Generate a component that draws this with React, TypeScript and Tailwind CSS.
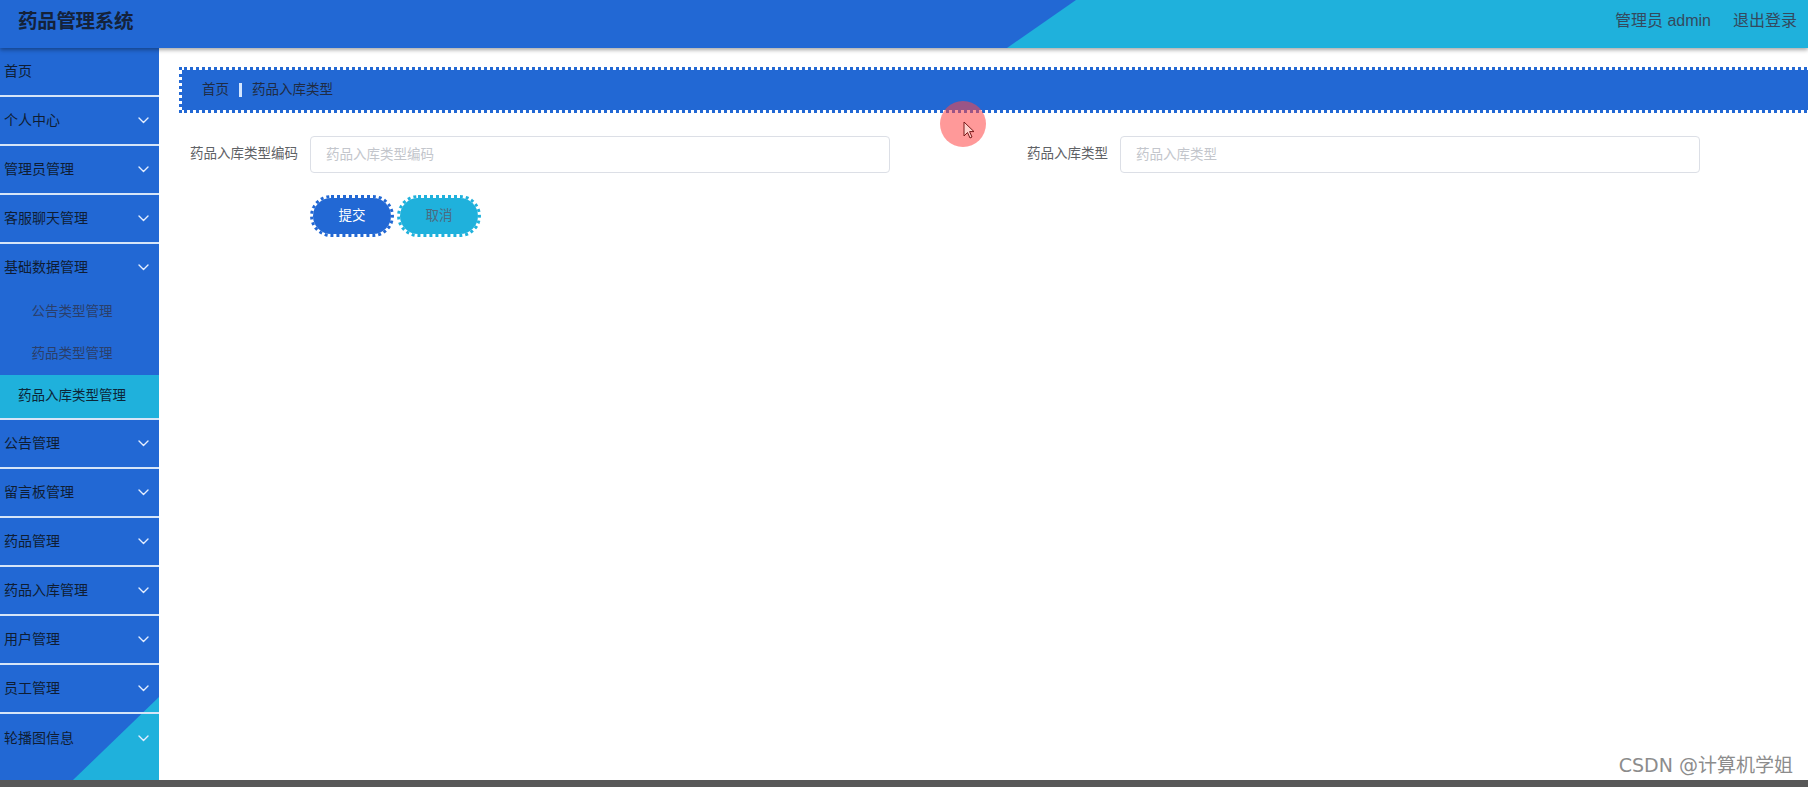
import React from "react";

const BLUE = "bg-[#2268d4]";

const MENU_TOP = ["首页", "个人中心", "管理员管理", "客服聊天管理"];
const MENU_BOTTOM = ["公告管理", "留言板管理", "药品管理", "药品入库管理", "用户管理", "员工管理"];
const SUB_MENU = [
  { label: "公告类型管理", h: "h-[42px]", active: false },
  { label: "药品类型管理", h: "h-[42px]", active: false },
  { label: "药品入库类型管理", h: "h-[43px]", active: true },
];

function Chevron() {
  return (
    <svg className="w-[11px] h-[7px]" viewBox="0 0 11 7" fill="none" stroke="#e4eeff" strokeWidth="1.4" strokeLinecap="round" strokeLinejoin="round">
      <polyline points="1,1 5.5,5.5 10,1" />
    </svg>
  );
}

function MenuItem({ label, arrow = true, last = false }: { label: string; arrow?: boolean; last?: boolean }) {
  return (
    <div
      className={`relative h-[49px] flex items-center justify-between pl-[4px] pr-[10px] ${
        last ? "" : "border-b-2 border-[#d6e5f8]"
      }`}
    >
      <span className="text-[14px] text-[#0f1d33]">{label}</span>
      {arrow && <Chevron />}
    </div>
  );
}

function Sidebar() {
  return (
    <aside className={`relative w-[159px] shrink-0 ${BLUE} overflow-hidden`}>
      {/* corner decoration */}
      <div className="absolute right-0 bottom-0 w-[86px] h-[83px] bg-[#1fb1dc] [clip-path:polygon(100%_0,100%_100%,0_100%)]" />
      <div className="relative">
        <MenuItem label={MENU_TOP[0]} arrow={false} />
        {MENU_TOP.slice(1).map((m) => (
          <MenuItem key={m} label={m} />
        ))}
        <div className="border-b-2 border-[#d6e5f8]">
          <div className="h-[47px] flex items-center justify-between pl-[4px] pr-[10px]">
            <span className="text-[14px] text-[#0f1d33]">基础数据管理</span>
            <Chevron />
          </div>
          {SUB_MENU.map((s) => (
            <div
              key={s.label}
              className={`${s.h} flex items-center justify-center pr-[15px] text-[13.5px] ${
                s.active ? "bg-[#1fb1dc] text-[#0c2638]" : "text-[#2a3f6b]"
              }`}
            >
              {s.label}
            </div>
          ))}
        </div>
        {MENU_BOTTOM.map((m) => (
          <MenuItem key={m} label={m} />
        ))}
        <MenuItem label="轮播图信息" last />
      </div>
    </aside>
  );
}

function Field({ label }: { label: string }) {
  return (
    <div className="flex items-center">
      <label className="w-[120px] pr-[12px] text-right text-[13.5px] text-[#5f6266]">{label}</label>
      <input
        placeholder={label}
        className="w-[580px] h-[37px] px-[15px] border border-[#dcdfe6] rounded-[4px] text-[13.5px] text-[#606266] placeholder:text-[#c3c6cc] outline-none bg-white"
      />
    </div>
  );
}

export default function App() {
  return (
    <div className="relative w-[1808px] h-[787px] flex flex-col overflow-hidden bg-white font-['Liberation_Sans','Noto_Sans_CJK_SC',sans-serif]">
      <header className={`relative z-10 h-[48px] shrink-0 ${BLUE} shadow-[0_2px_4px_rgba(0,0,0,0.35)] flex items-center justify-between`}>
        <div className="absolute left-[1007px] right-0 top-0 bottom-0 bg-[#1fb1dc] [clip-path:polygon(69px_0,100%_0,100%_100%,0_100%)]" />
        <h1 className="relative pl-[18px] pb-[4px] text-[19.5px] font-bold text-[#14223a] tracking-[-0.3px]">药品管理系统</h1>
        <div className="relative flex items-center gap-[22px] pr-[11px] pb-[6px] text-[16px] text-[#34495e]">
          <span>管理员 admin</span>
          <span>退出登录</span>
        </div>
      </header>

      <div className="flex flex-1 min-h-0">
        <Sidebar />
        <main className="flex-1 min-w-0 pl-[20px] pt-[19px] overflow-hidden">
          <div className={`-mr-[10px] h-[46px] ${BLUE} bg-clip-padding border-[3px] border-dotted border-[#2268d4] flex items-center pl-[20px] text-[13.5px] text-[#1f2c45]`}>
            <span>首页</span>
            <span className="mx-[10px] w-[3px] h-[14px] bg-[#d4e6ff]" />
            <span>药品入库类型</span>
          </div>

          <div className="mt-[23px] ml-[11px] flex gap-[110px]">
            <Field label="药品入库类型编码" />
            <Field label="药品入库类型" />
          </div>

          <div className="mt-[22px] ml-[131px] flex gap-[3px]">
            <button
              type="button"
              className="w-[84px] h-[42px] rounded-full bg-[#2268d4] bg-clip-padding border-[3px] border-dotted border-[#2268d4] text-[13.5px] text-white"
            >
              提交
            </button>
            <button
              type="button"
              className="w-[84px] h-[42px] rounded-full bg-[#1fb1dc] bg-clip-padding border-[3px] border-dotted border-[#1fb1dc] text-[13.5px] text-[#4d6a80]"
            >
              取消
            </button>
          </div>
        </main>
      </div>

      <div className="h-[7px] shrink-0 bg-[#585858]" />

      {/* click highlight from the screen recording */}
      <div className="absolute left-[940px] top-[101px] w-[46px] h-[46px] rounded-full bg-[rgba(255,70,70,0.55)] z-20" />
      <svg className="absolute left-[963px] top-[121px] w-[12px] h-[18px] z-20" viewBox="0 0 12 18">
        <path d="M1 1 L1 15 L4.5 11.5 L7 17 L9 16 L6.6 10.6 L11 10.6 Z" fill="#ffd0cc" stroke="#7a1a1a" strokeWidth="1" strokeLinejoin="round" />
      </svg>

      <div className="absolute right-[15px] bottom-[8px] z-20 text-[19px] text-[#8c8c8c] [text-shadow:0_0_2px_#fff] font-['DejaVu_Sans','Noto_Sans_CJK_SC',sans-serif]">
        CSDN @计算机学姐
      </div>
    </div>
  );
}
